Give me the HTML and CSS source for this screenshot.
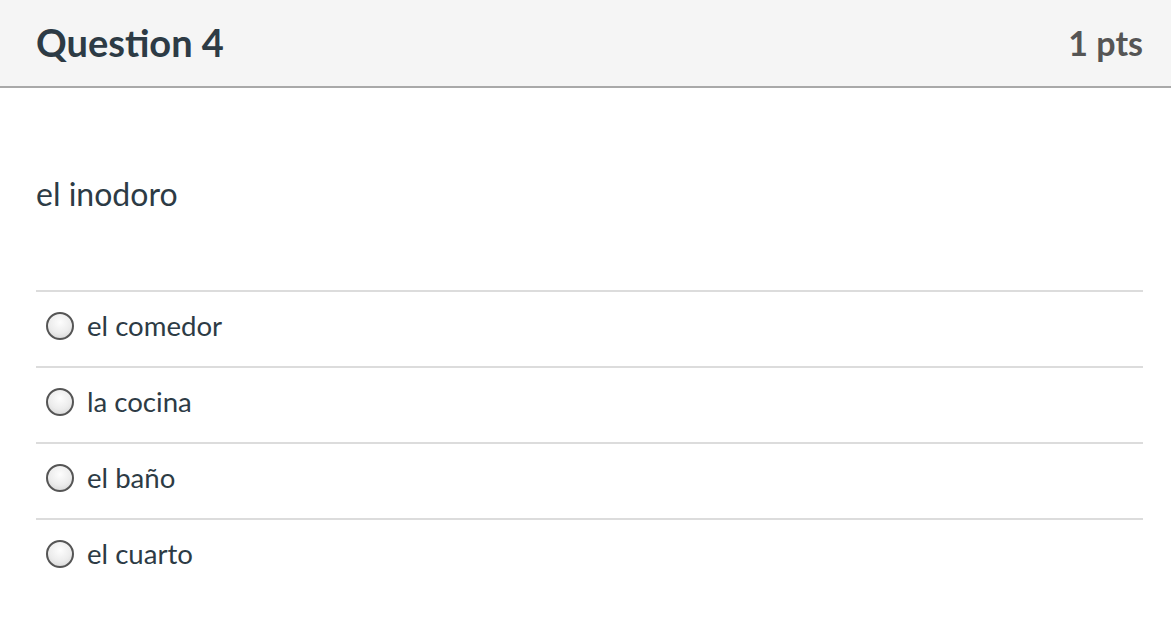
FILE: index.html
```html
<!DOCTYPE html>
<html>
<head>
<meta charset="utf-8">
<link rel="stylesheet" href="styles.css">
</head>
<body>
<div class="question">
  <div class="header">
    <h2 class="title">Question 4</h2>
    <div class="points">1 pts</div>
  </div>
  <div class="content">
    <p class="prompt">el inodoro</p>
    <div class="answers">
      <label class="answer"><span class="radio"></span><span class="label">el comedor</span></label>
      <label class="answer"><span class="radio"></span><span class="label">la cocina</span></label>
      <label class="answer"><span class="radio"></span><span class="label">el baño</span></label>
      <label class="answer"><span class="radio"></span><span class="label">el cuarto</span></label>
    </div>
  </div>
</div>
</body>
</html>
```

FILE: styles.css
```css
html, body {
  margin: 0;
  padding: 0;
  background: #fff;
}
body {
  font-family: Lato, "Open Sans", sans-serif;
  color: #2d3b45;
  width: 1171px;
  height: 619px;
  overflow: hidden;
}
.header {
  background: #f5f5f5;
  height: 86px;
  border-bottom: 2px solid #a9a9a9;
  box-sizing: content-box;
  display: flex;
  align-items: center;
  justify-content: space-between;
  padding: 0 28px 0 36px;
}
.title {
  margin: 0 0 2px 0;
  font-size: 38px;
  font-weight: 700;
  color: #2d3b45;
}
.points {
  margin-bottom: 2px;
  font-size: 34px;
  font-weight: 700;
  color: #555;
}
.content {
  padding: 0 28px 0 36px;
}
.prompt {
  margin: 0;
  padding-top: 88px;
  height: 202px;
  box-sizing: border-box;
  font-size: 32px;
  line-height: 36px;
}
.answers {
  display: flex;
  flex-direction: column;
}
.answer {
  display: flex;
  align-items: center;
  height: 76px;
  border-top: 2px solid #dcdcdc;
  box-sizing: border-box;
  padding-left: 10px;
  padding-bottom: 7px;
  font-size: 27.6px;
}
.radio {
  width: 24px;
  height: 24px;
  border-radius: 50%;
  border: 2px solid #555;
  background: radial-gradient(circle at 50% 35%, #fdfdfd 0%, #ececec 55%, #cfcfcf 100%);
  margin-right: 13px;
  flex: none;
}
.label {
  line-height: 1;
}
```
